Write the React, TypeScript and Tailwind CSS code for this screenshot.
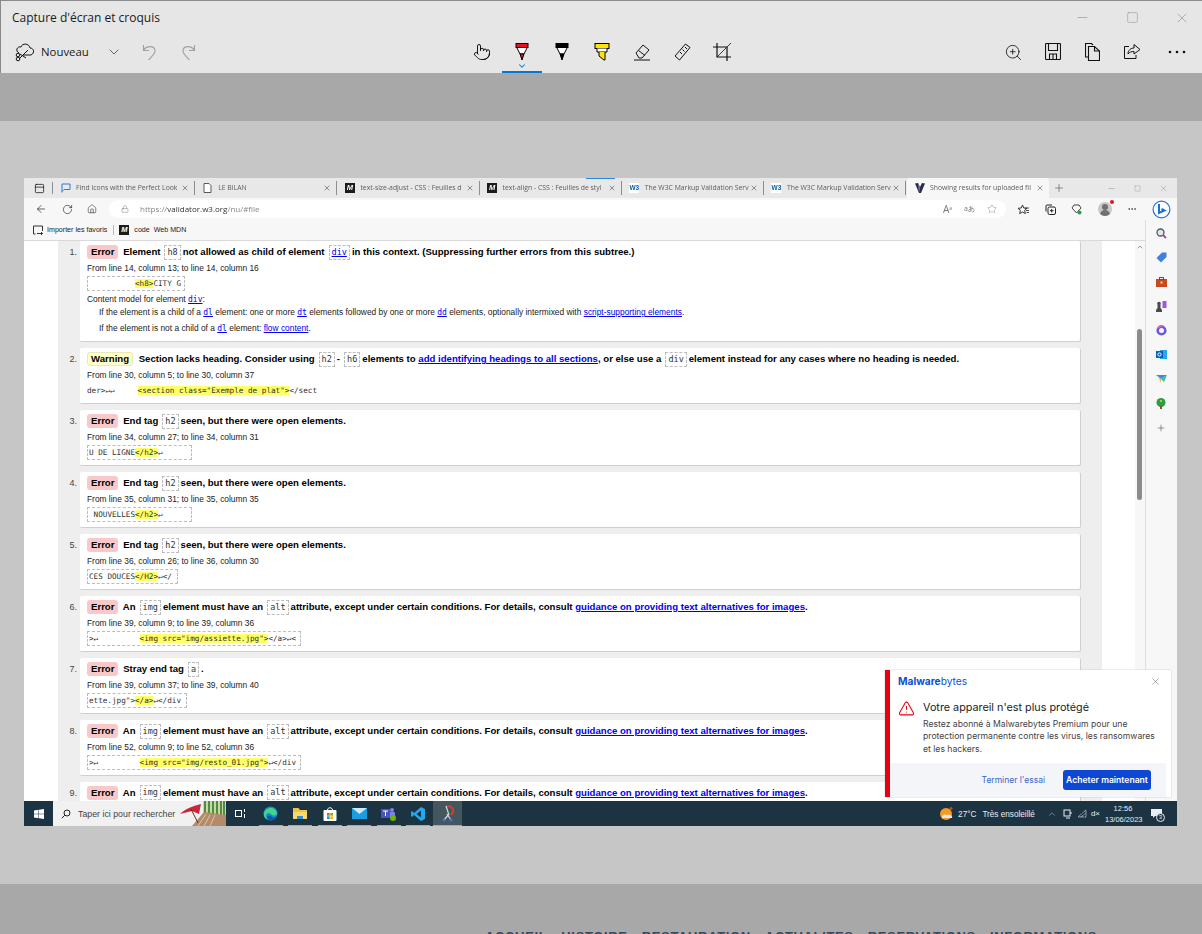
import type { ReactNode } from "react";
import {
  ArrowLeft,
  ChevronDown,
  ChevronUp,
  Home,
  Lock,
  Minus,
  MoreHorizontal,
  PanelTop,
  Plus,
  Pointer,
  RotateCw,
  Square,
  Star,
  TriangleAlert,
  X,
  ZoomIn,
} from "lucide-react";

const SANS = "font-['Liberation_Sans',Arial,sans-serif]";
const MONO = "font-['DejaVu_Sans_Mono',monospace]";

function Tool({ children }: { children: ReactNode }) {
  return <div className="w-[40px] h-full flex items-center justify-center text-black">{children}</div>;
}

function Marker({ top, body }: { top: string; body: string }) {
  return (
    <svg width="14" height="18" viewBox="0 0 14 18">
      <rect x="1" y="0.5" width="12" height="4" fill={top} stroke="#000" />
      <path d="M2 5 L5 11 L9 11 L12 5" fill={body} stroke="#000" />
      <path d="M5 11 L7 17 L9 11Z" fill={top} stroke="#000" />
    </svg>
  );
}

function Highlighter() {
  return (
    <svg width="16" height="18" viewBox="0 0 16 18">
      <rect x="1" y="0.5" width="14" height="5" fill="#ffe600" stroke="#000" />
      <path d="M3 5.5 V9 H13 V5.5" fill="#fff" stroke="#000" />
      <path d="M5 9 V13 L10 17 H11 V9" fill="#ffe600" stroke="#000" />
    </svg>
  );
}

function UndoIcon({ flip }: { flip?: boolean }) {
  return (
    <svg className={flip ? "-scale-x-100" : ""} width="14" height="18" viewBox="0 0 14 18" fill="none" stroke="#a0a0a0" strokeWidth="1.1">
      <path d="M1.5 2 V7.5 H7" />
      <path d="M1.5 7.5 C4 2.5 13 2 13 8 C13 11 9 14 6.5 17" />
    </svg>
  );
}

function CaptureBar() {
  return (
    <div className="h-[73px] bg-[#e6e6e6] border-t border-l border-[#8a8a8a] flex flex-col font-['Open_Sans',sans-serif] text-[#1a1a1a]">
      <div className="h-[35px] flex items-center relative">
        <span className="pl-[11px] pt-[1px] text-[12px]">Capture d'écran et croquis</span>
        <div className="ml-auto flex items-center text-[#8f8f8f]">
          <div className="w-[50px] flex justify-center"><Minus size={15} strokeWidth={1} /></div>
          <div className="w-[50px] flex justify-center"><Square size={13} strokeWidth={1} /></div>
          <div className="w-[50px] flex justify-center -mr-[5px]"><X size={16} strokeWidth={1} /></div>
        </div>
      </div>
      <div className="flex-1 flex items-center pb-[3px] relative">
        <div className="w-[461px] flex items-center">
          <svg className="ml-[13px]" width="22" height="20" viewBox="0 0 22 20" fill="none" stroke="#111" strokeWidth="1">
            <path d="M5 11 C1 9 3 4 7 5 C8 1 15 1 16 6 C20 6 21 11 17 13 L9 13" />
            <path d="M14 8 L6 16 M6 12 L12 16" />
            <circle cx="4" cy="17" r="1.8" />
            <circle cx="4" cy="13" r="1.8" />
          </svg>
          <span className="ml-[5px] text-[11.4px]">Nouveau</span>
          <ChevronDown className="ml-[17px] text-[#222]" size={16} strokeWidth={1} />
          <div className="ml-[20px]"><UndoIcon /></div>
          <div className="ml-[26px]"><UndoIcon flip /></div>
        </div>
        <div className="flex h-[36px] relative">
          <Tool><Pointer size={18} strokeWidth={1.2} /></Tool>
          <Tool><Marker top="#e81123" body="#fff" /></Tool>
          <Tool><Marker top="#000" body="#fff" /></Tool>
          <Tool><Highlighter /></Tool>
          <Tool>
            <svg width="18" height="18" viewBox="0 0 18 18" fill="none" stroke="#111">
              <path d="M3 10 L10 2 L16 7 L9 15 H6 Z" />
              <path d="M5.5 7.5 L12 12.5" />
              <path d="M1 17 H17" />
            </svg>
          </Tool>
          <Tool>
            <svg width="17" height="18" viewBox="0 0 17 18" fill="none" stroke="#111">
              <path d="M1 13 L11.5 1 L16 4.5 L5.5 17 Z" />
              <path d="M6 9 L8 11 M8.5 6.5 L10.5 8.5 M11 4 L13 6" />
            </svg>
          </Tool>
          <Tool>
            <svg width="18" height="18" viewBox="0 0 18 18" fill="none" stroke="#111" strokeWidth="1.2">
              <path d="M0 4 H14 V18 M4 0 V14 H18" />
              <path d="M4 14 L18 0" strokeWidth="0.8" />
            </svg>
          </Tool>
          <div className="absolute left-[40px] bottom-[-3px] w-[40px] h-[2px] bg-[#0078d7]" />
          <ChevronDown className="absolute left-[55px] bottom-[-1px] text-[#0078d7]" size={10} strokeWidth={2.5} />
        </div>
        <div className="ml-auto flex">
          <div className="w-[39.7px] flex justify-center"><ZoomIn size={19} strokeWidth={1.1} /></div>
          <div className="w-[39.7px] flex justify-center">
            <svg width="16" height="17" viewBox="0 0 16 17" fill="none" stroke="#111" strokeWidth="1.1">
              <path d="M1.5 0.5 H14.5 Q15.5 0.5 15.5 1.5 V15.5 Q15.5 16.5 14.5 16.5 H1.5 Q0.5 16.5 0.5 15.5 V1.5 Q0.5 0.5 1.5 0.5Z" />
              <path d="M3.5 1 V7.5 H12.5 V1" />
              <path d="M4.5 16 V11 H11.5 V16 M8 11 V16" />
            </svg>
          </div>
          <div className="w-[39.7px] flex justify-center">
            <svg width="15" height="18" viewBox="0 0 15 18" fill="none" stroke="#111" strokeWidth="1.1">
              <path d="M4 14 H0.5 V0.5 H6.5 L8 2" />
              <path d="M3.5 3.5 H9.5 L14.5 8 V17.5 H3.5 Z" fill="#e6e6e6" />
              <path d="M9.5 3.5 V8 H14.5" />
            </svg>
          </div>
          <div className="w-[39.7px] flex justify-center">
            <svg width="17" height="17" viewBox="0 0 17 17" fill="none" stroke="#111">
              <path d="M5 3.5 H0.5 V15.5 H12 V12" />
              <path d="M4 11 C4 7 7 5 10 5 V1.5 L16 6.5 L10 11 V8.5 C7.5 8.5 5.5 9 4 11Z" />
            </svg>
          </div>
          <div className="w-[50px] flex justify-center items-center">
            <svg width="18" height="4" viewBox="0 0 18 4" fill="#111">
              <circle cx="2" cy="2" r="1.3" />
              <circle cx="9" cy="2" r="1.3" />
              <circle cx="16" cy="2" r="1.3" />
            </svg>
          </div>
        </div>
      </div>
    </div>
  );
}

function BrowserTab({ icon, title, active }: { icon: ReactNode; title: string; active?: boolean }) {
  return (
    <div
      className={
        "w-[142.2px] flex items-center pl-[7px] pr-[5px] " +
        (active ? "h-full bg-[#f7f7f7] rounded-t-[3px]" : "h-[14px] border-r border-[#8e8e8e]")
      }
    >
      <div className="w-[11px] h-[11px] flex items-center justify-center shrink-0">{icon}</div>
      <span className="ml-[5px] w-[103px] text-[6.85px] text-[#5c5c5c] whitespace-nowrap">{title}</span>
      <X className="ml-auto text-[#333] shrink-0" size={8} strokeWidth={1.5} />
    </div>
  );
}

function MdnIcon() {
  return (
    <div className={"w-[10px] h-[10px] bg-[#1b1b1b] text-white text-[7.5px] font-bold italic leading-[10px] text-center " + SANS}>M</div>
  );
}

function W3Icon() {
  return (
    <div className={"w-[10px] h-[10px] bg-white text-[#0a5da8] text-[6.5px] font-bold leading-[10px] text-center " + SANS}>W3</div>
  );
}

function VIcon() {
  return (
    <svg width="10" height="10" viewBox="0 0 10 10">
      <path d="M0 0.5 L3 0 L5 4 L7 0 L10 0.5 L6 10 L4 10Z" fill="#2a2a4a" />
      <path d="M3 0 L5 5 L4 10Z" fill="#7a7ab0" />
    </svg>
  );
}

function TabStrip() {
  return (
    <div className="h-[20px] bg-[#e8e8e8] flex items-end relative">
      <div className="w-[28px] h-full flex items-center justify-center">
        <PanelTop size={11} strokeWidth={1.5} className="text-black ml-[2px]" />
      </div>
      <div className="w-[1px] h-[12px] mb-[4px] bg-[#8e8e8e]" />
      <div className="flex h-full items-center w-[854px] shrink-0">
        <BrowserTab
          title="Find Icons with the Perfect Look"
          icon={
            <svg width="10" height="10" viewBox="0 0 10 10" fill="none" stroke="#2b7de0" strokeWidth="1">
              <path d="M1 9.5 V1 H9 V6.5 H3 L1 8.5" />
            </svg>
          }
        />
        <BrowserTab
          title="LE BILAN"
          icon={
            <svg width="9" height="10" viewBox="0 0 9 10" fill="#fff" stroke="#333" strokeWidth="0.8">
              <path d="M1 0.5 H6 L8 2.5 V9.5 H1Z" />
            </svg>
          }
        />
        <BrowserTab title="text-size-adjust - CSS : Feuilles d" icon={<MdnIcon />} />
        <BrowserTab title="text-align - CSS : Feuilles de styl" icon={<MdnIcon />} />
        <BrowserTab title="The W3C Markup Validation Serv" icon={<W3Icon />} />
        <BrowserTab title="The W3C Markup Validation Serv" icon={<W3Icon />} />
      </div>
      <BrowserTab active title="Showing results for uploaded fil" icon={<VIcon />} />
      <Plus className="ml-[4px] mb-[4px] text-[#333]" size={12} strokeWidth={1} />
      <div className="ml-auto flex h-full items-center text-[#777] pr-[9px] gap-[18px]">
        <Minus size={9} strokeWidth={1} />
        <Square size={7} strokeWidth={1} />
        <X size={9} strokeWidth={1} />
      </div>
      <div className="absolute left-[562px] top-0 w-[29px] h-[1px] bg-[#2b88d8]" />
    </div>
  );
}

function AddressBar() {
  return (
    <div className="h-[22px] bg-[#f7f7f7] flex items-center text-[#222] relative">
      <ArrowLeft className="ml-[11px]" size={12} strokeWidth={1.4} />
      <RotateCw className="ml-[15px]" size={11} strokeWidth={1.4} />
      <Home className="ml-[14px]" size={10} strokeWidth={1.3} />
      <div className="ml-[12px] w-[897px] h-[18px] bg-white rounded-full flex items-center text-[8px]">
        <Lock className="ml-[12px] text-[#666]" size={8} strokeWidth={1.2} />
        <span className="ml-[11px] text-[#888]">
          https://<span className="text-[#333]">validator.w3.org</span>/nu/#file
        </span>
        <div className="ml-auto flex items-center text-[#777] gap-[12px] pr-[9px]">
          <span className="text-[10px]">A<sup className="text-[5px]">a</sup></span>
          <span className="text-[7px]">aあ</span>
          <Star size={10} strokeWidth={1} />
        </div>
      </div>
      <svg className="ml-[12px]" width="11" height="11" viewBox="0 0 11 11" fill="none" stroke="#222">
        <path d="M4.5 1 L5.8 4 L9 4.3 L6.6 6.4 L7.3 9.6 L4.5 8 L1.7 9.6 L2.4 6.4 L0 4.3 L3.2 4Z" strokeWidth="0.9" />
        <path d="M8 6.5 H11 M8.5 8.5 H11 M7 4 H11" strokeWidth="0.8" />
      </svg>
      <svg className="ml-[16px]" width="11" height="11" viewBox="0 0 11 11" fill="none" stroke="#222">
        <rect x="3" y="3" width="7.5" height="7.5" rx="1.5" />
        <path d="M1 7.5 V2 Q1 1 2 1 H7 M6.7 5 V8.5 M5 6.7 H8.5" />
      </svg>
      <svg className="ml-[15px]" width="11" height="11" viewBox="0 0 11 11" fill="none" stroke="#444">
        <path d="M1 4 L3 1 H8 L10 4 L5.5 9Z" />
        <circle cx="8.5" cy="8.5" r="2" fill="#1aa251" stroke="none" />
      </svg>
      <div className="ml-[16px] relative w-[14px] h-[14px] rounded-full bg-[#c8c8c8] overflow-hidden flex flex-col items-center">
        <div className="w-[6px] h-[6px] mt-[2px] rounded-full bg-[#707070]" />
        <div className="w-[10px] h-[6px] rounded-t-full bg-[#707070]" />
      </div>
      <div className="absolute left-[1086px] top-[2px] w-[4px] h-[4px] rounded-full bg-[#e81123]" />
      <MoreHorizontal className="ml-[15px]" size={10} strokeWidth={1.5} />
      <svg className="ml-[15px]" width="19" height="19" viewBox="0 0 19 19" fill="none">
        <circle cx="9.5" cy="9.5" r="8.4" fill="#fff" stroke="#2a6fd6" strokeWidth="1.2" />
        <path d="M7 4 V13 L12.5 10.5 L9.5 9" stroke="#1173d4" strokeWidth="2" />
      </svg>
    </div>
  );
}

function FavoritesBar() {
  return (
    <div className={"h-[21px] bg-[#f7f7f7] border-b border-[#d9d9d9] flex items-center text-[7.1px] text-[#222] " + SANS}>
      <svg className="ml-[9px]" width="10" height="10" viewBox="0 0 10 10" fill="none" stroke="#333">
        <path d="M2.5 9 H0.5 V1 H9.5 V6 M4 8.5 H10 M8 7 L9.5 8.5 L8 10" />
      </svg>
      <span className="ml-[4px]">Importer les favoris</span>
      <div className="ml-[6px] w-[1px] h-[10px] bg-[#bbb]" />
      <div className="ml-[5px]"><MdnIcon /></div>
      <span className="ml-[5px]">code</span>
      <span className="ml-[4px]">Web MDN</span>
    </div>
  );
}

function Chip({ children, link }: { children: ReactNode; link?: boolean }) {
  return (
    <code
      className={
        "inline-block ml-[4px] mr-[2px] px-[2px] h-[15px] leading-[13px] align-middle border border-dashed border-[#bdbdbd] text-[8.5px] font-normal " +
        MONO +
        (link ? " text-[#0000ee] underline" : " text-[#333]")
      }
    >
      {children}
    </code>
  );
}

function Badge({ kind }: { kind: "Error" | "Warning" }) {
  return (
    <span
      className={
        "inline-block h-[14px] rounded-[3px] " +
        (kind === "Error"
          ? "px-[4px] mr-[2px] leading-[14px] bg-[#f9c8c8]"
          : "px-[3px] mr-[3px] leading-[12px] bg-[#ffffc8] border border-[#e8e8b8]")
      }
    >
      {kind}
    </span>
  );
}

function MLink({ children }: { children: ReactNode }) {
  return <a className="text-[#0000ee] underline">{children}</a>;
}

function InlineCode({ children }: { children: ReactNode }) {
  return <code className={"text-[#0000ee] underline text-[8px] " + MONO}>{children}</code>;
}

function Extract({ children, plain, w }: { children: ReactNode; plain?: boolean; w: string }) {
  return (
    <div
      className={
        "h-[15px] leading-[13px] text-[7.65px] text-[#333] whitespace-pre mt-[2px] border border-dashed " +
        MONO +
        " " +
        w +
        (plain ? " border-transparent -ml-[1px]" : " border-[#bdbdbd] pl-[1px]")
      }
    >
      {children}
    </div>
  );
}

function Y({ children }: { children: ReactNode }) {
  return <span className="bg-[#ffff66]">{children}</span>;
}

function Message({ n, h, children }: { n: number; h: string; children: ReactNode }) {
  return (
    <div className={"flex shrink-0 " + h}>
      <div className="w-[22px] text-[9px] text-[#444] pt-[5px] text-right pr-[3px]">{n}.</div>
      <div className="w-[1001px] bg-white rounded-[2px] border-b border-r border-[#cfcfcf] pl-[7px] pt-[3px] overflow-hidden">
        {children}
      </div>
    </div>
  );
}

function Title({ children }: { children: ReactNode }) {
  return <div className="text-[9.6px] leading-[16px] font-bold text-black whitespace-nowrap">{children}</div>;
}

function From({ children }: { children: ReactNode }) {
  return <div className="text-[8.4px] leading-[11px] mt-[3px] text-[#222]">{children}</div>;
}

function AltTitle() {
  return (
    <Title>
      <Badge kind="Error" /> An<Chip>img</Chip>element must have an<Chip>alt</Chip>attribute, except under certain conditions. For details, consult{" "}
      <MLink>guidance on providing text alternatives for images</MLink>.
    </Title>
  );
}

function EndTag() {
  return (
    <Title>
      <Badge kind="Error" /> End tag<Chip>h2</Chip>seen, but there were open elements.
    </Title>
  );
}

function Results() {
  return (
    <div className={"flex-1 flex bg-white overflow-hidden " + SANS}>
      <div className="ml-[34px] w-[1044px] bg-[#eeeeee] flex flex-col gap-[5.95px] overflow-hidden">
        <Message n={1} h="h-[101px]">
          <Title>
            <Badge kind="Error" /> Element<Chip>h8</Chip>not allowed as child of element<Chip link>div</Chip>in this context. (Suppressing further errors from this subtree.)
          </Title>
          <From>From line 14, column 13; to line 14, column 16</From>
          <Extract w="w-[98px]">{"          "}<Y>{"<h8>"}</Y>CITY G</Extract>
          <div className="text-[8.4px] leading-[11px] mt-[3px] text-[#222]">Content model for element <InlineCode>div</InlineCode>:</div>
          <div className="text-[8.4px] leading-[11px] mt-[2px] ml-[12px] text-[#222] whitespace-nowrap">
            If the element is a child of a <InlineCode>dl</InlineCode> element: one or more <InlineCode>dt</InlineCode> elements followed by one or more <InlineCode>dd</InlineCode> elements, optionally intermixed with <MLink>script-supporting elements</MLink>.
          </div>
          <div className="text-[8.4px] leading-[11px] mt-[5px] ml-[12px] text-[#222]">
            If the element is not a child of a <InlineCode>dl</InlineCode> element: <MLink>flow content</MLink>.
          </div>
        </Message>
        <Message n={2} h="h-[56px]">
          <Title>
            <Badge kind="Warning" /> Section lacks heading. Consider using<Chip>h2</Chip>-<Chip>h6</Chip>elements to <MLink>add identifying headings to all sections</MLink>, or else use a<Chip>div</Chip>element instead for any cases where no heading is needed.
          </Title>
          <From>From line 30, column 5; to line 30, column 37</From>
          <Extract plain w="w-[260px]">{"der>↵↵     "}<Y>{'<section class="Exemple de plat">'}</Y>{"</sect"}</Extract>
        </Message>
        <Message n={3} h="h-[56px]">
          <EndTag />
          <From>From line 34, column 27; to line 34, column 31</From>
          <Extract w="w-[105px]">U DE LIGNE<Y>{"</h2>"}</Y>↵</Extract>
        </Message>
        <Message n={4} h="h-[56px]">
          <EndTag />
          <From>From line 35, column 31; to line 35, column 35</From>
          <Extract w="w-[105px]"> NOUVELLES<Y>{"</h2>"}</Y>↵</Extract>
        </Message>
        <Message n={5} h="h-[56px]">
          <EndTag />
          <From>From line 36, column 26; to line 36, column 30</From>
          <Extract w="w-[91px]">CES DOUCES<Y>{"</H2>"}</Y>{"↵</"}</Extract>
        </Message>
        <Message n={6} h="h-[56px]">
          <AltTitle />
          <From>From line 39, column 9; to line 39, column 36</From>
          <Extract w="w-[214px]">{">↵         "}<Y>{'<img src="img/assiette.jpg">'}</Y>{"</a>↵<"}</Extract>
        </Message>
        <Message n={7} h="h-[56px]">
          <Title>
            <Badge kind="Error" /> Stray end tag<Chip>a</Chip>.
          </Title>
          <From>From line 39, column 37; to line 39, column 40</From>
          <Extract w="w-[100px]">{'ette.jpg">'}<Y>{"</a>"}</Y>{"↵</div"}</Extract>
        </Message>
        <Message n={8} h="h-[56px]">
          <AltTitle />
          <From>From line 52, column 9; to line 52, column 36</From>
          <Extract w="w-[214px]">{">↵         "}<Y>{'<img src="img/resto_01.jpg">'}</Y>{"↵</div"}</Extract>
        </Message>
        <Message n={9} h="h-[56px]">
          <AltTitle />
        </Message>
      </div>
      <div className="w-[33px] bg-white" />
      <div className="w-[10px] bg-[#f7f7f7] relative">
        <ChevronUp className="absolute top-[2px] left-[1px] text-[#888]" size={8} strokeWidth={2.5} />
        <div className="absolute top-[88px] left-[2px] w-[5px] h-[171px] rounded-full bg-[#8c8c8c]" />
      </div>
    </div>
  );
}

function SideItem({ children }: { children: ReactNode }) {
  return <div className="h-[24.3px] flex items-center justify-center">{children}</div>;
}

function EdgeSidebar() {
  return (
    <div className="w-[32px] bg-[#f7f7f7] border-l border-[#dedede] flex flex-col pt-[1px] pr-[1px]">
      <SideItem>
        <svg width="11" height="11" viewBox="0 0 11 11" fill="none">
          <circle cx="4.5" cy="4.5" r="3.5" fill="#dde6f2" stroke="#555" strokeWidth="1.3" />
          <path d="M7 7 L10 10" stroke="#a63ad6" strokeWidth="1.8" />
        </svg>
      </SideItem>
      <SideItem>
        <svg width="11" height="11" viewBox="0 0 11 11">
          <path d="M6 0.5 H10.5 V5 L5 10.5 L0.5 6Z" fill="#3f7fe0" />
        </svg>
      </SideItem>
      <SideItem>
        <svg width="11" height="10" viewBox="0 0 11 10">
          <rect x="0" y="2" width="11" height="8" fill="#c9481f" />
          <rect x="3.5" y="0.5" width="4" height="2" fill="none" stroke="#9b3a1c" />
          <rect x="4.5" y="4.5" width="2" height="2" fill="#f3d9a6" />
        </svg>
      </SideItem>
      <SideItem>
        <svg width="12" height="11" viewBox="0 0 12 11">
          <path d="M1 11 V9 L2.5 7 V3.5 H5.5 V7 L7 9 V11Z" fill="#4a4a4a" />
          <circle cx="4" cy="2.5" r="1.8" fill="#4a4a4a" />
          <rect x="7.5" y="0" width="4" height="7" fill="#9b59e6" />
        </svg>
      </SideItem>
      <SideItem>
        <svg width="11" height="11" viewBox="0 0 11 11" fill="none">
          <circle cx="5.5" cy="5.5" r="3.8" stroke="#6a5ad6" strokeWidth="2.6" />
          <path d="M2 3 A4.5 4.5 0 0 1 7 1.2" stroke="#d65ac8" strokeWidth="2" />
        </svg>
      </SideItem>
      <SideItem>
        <svg width="11" height="11" viewBox="0 0 11 11">
          <rect x="4" y="1" width="7" height="9" fill="#28a8ea" />
          <rect x="0" y="2" width="7" height="7" fill="#0f5fb5" />
          <circle cx="3.5" cy="5.5" r="1.6" fill="none" stroke="#fff" />
        </svg>
      </SideItem>
      <SideItem>
        <svg width="11" height="9" viewBox="0 0 11 9">
          <path d="M0 1 H11 L5 5Z" fill="#2f8fe6" />
          <path d="M2 2 L5 5 L5 9Z" fill="#e8b23a" />
          <path d="M5 5 L11 1 L8 8Z" fill="#37b8b0" />
        </svg>
      </SideItem>
      <SideItem>
        <svg width="10" height="11" viewBox="0 0 10 11">
          <circle cx="5" cy="4.5" r="4.5" fill="#2e9e46" />
          <rect x="4" y="8" width="2" height="3" fill="#7a5a2a" />
          <circle cx="5" cy="3" r="1" fill="#e8d03a" />
        </svg>
      </SideItem>
      <SideItem>
        <Plus className="text-[#333]" size={10} strokeWidth={1.2} />
      </SideItem>
    </div>
  );
}

function Under({ children }: { children: ReactNode }) {
  return (
    <div className="relative w-[24px] h-[25px] flex items-center justify-center mx-[2.75px]">
      {children}
      <div className="absolute bottom-0 left-0 right-0 h-[1px] bg-[#7fb2dc]" />
    </div>
  );
}

function Taskbar() {
  return (
    <div className={"h-[25px] bg-[#1c3342] flex items-center text-white " + SANS}>
      <div className="w-[29px] flex justify-center">
        <svg width="10" height="10" viewBox="0 0 10 10" fill="#fff">
          <path d="M0 1.5 L4.5 0.8 V4.7 H0Z M5 0.7 L10 0 V4.7 H5Z M0 5.3 H4.5 V9.2 L0 8.5Z M5 5.3 H10 V10 L5 9.3Z" />
        </svg>
      </div>
      <div className="w-[173px] h-[25px] bg-[#f1f1f1] flex items-center text-[#444] text-[8.8px] overflow-hidden">
        <svg className="ml-[8px]" width="10" height="10" viewBox="0 0 10 10" fill="none" stroke="#222">
          <circle cx="6" cy="4" r="3" />
          <path d="M3.8 6.2 L0.8 9.2" />
        </svg>
        <span className="ml-[7px] pt-[3px] whitespace-nowrap">Taper ici pour rechercher</span>
        <svg className="ml-auto shrink-0" width="46" height="25" viewBox="0 0 46 25">
          <rect x="23" y="0" width="23" height="14" fill="#c7d89a" />
          <path d="M25 0 V14 M29 0 V14 M33 0 V14 M37 0 V14 M41 0 V14 M44 0 V14" stroke="#2f7a35" strokeWidth="1.6" />
          <path d="M12 25 L24 11 L46 14 V25 H12Z" fill="#b38a6a" />
          <path d="M18 25 L26 13 M24 25 L30 14 M30 25 L35 14" stroke="#e0c4a6" strokeWidth="1" />
          <path d="M0 13 C6 7 14 5 21 3 L19 13 L12 10 Z" fill="#c8283a" />
          <path d="M11 8 L18 22" stroke="#6a2a1a" />
        </svg>
      </div>
      <div className="w-[29px] flex justify-center">
        <svg width="11" height="9" viewBox="0 0 11 9" fill="none" stroke="#fff">
          <rect x="0.5" y="1.5" width="6" height="6" />
          <path d="M9.5 0 V3 M9.5 5 V9" />
        </svg>
      </div>
      <div className="flex ml-[1px]">
        <Under>
          <svg width="15" height="15" viewBox="0 0 15 15">
            <circle cx="7.5" cy="7.5" r="7" fill="#1b89d6" />
            <path d="M1 7 C3 1 12 0 14 7 C14 10 9 10 8 8 C6 6 3 7 3 10 C3 12 5 14 7 14 C3 14 0 11 1 7Z" fill="#44d488" />
            <path d="M4 12 C4 9 8 9 9 11 C11 12 13 11 14 10 C13 13 9 15 7 14 C5.5 14 4 13 4 12Z" fill="#0c5da6" />
          </svg>
        </Under>
        <Under>
          <svg width="14" height="13" viewBox="0 0 14 13">
            <path d="M0 1 H5.5 L7 3 H14 V12 H0Z" fill="#f2c14a" />
            <rect x="0" y="5" width="14" height="7" fill="#fbd96b" />
            <rect x="4" y="9" width="6" height="3" fill="#2e8fd8" />
          </svg>
        </Under>
        <Under>
          <svg width="14" height="14" viewBox="0 0 14 14">
            <rect x="0.5" y="3" width="13" height="11" rx="1" fill="#fff" />
            <path d="M4.5 3 C4.5 0 9.5 0 9.5 3" fill="none" stroke="#fff" />
            <rect x="4" y="6" width="2.7" height="2.7" fill="#f25022" />
            <rect x="7.3" y="6" width="2.7" height="2.7" fill="#7fba00" />
            <rect x="4" y="9.3" width="2.7" height="2.7" fill="#00a4ef" />
            <rect x="7.3" y="9.3" width="2.7" height="2.7" fill="#ffb900" />
          </svg>
        </Under>
        <Under>
          <svg width="15" height="11" viewBox="0 0 15 11">
            <rect width="15" height="11" fill="#1b9de2" />
            <path d="M0 0 L7.5 6 L15 0Z" fill="#cfeafa" />
          </svg>
        </Under>
        <Under>
          <svg width="15" height="14" viewBox="0 0 15 14">
            <circle cx="11" cy="3" r="2" fill="#7b83eb" />
            <rect x="8" y="5" width="6" height="6" rx="1" fill="#7b83eb" />
            <rect x="0" y="2" width="9" height="9" fill="#4b53bc" />
            <path d="M2 4 H7 M4.5 4 V9" stroke="#fff" />
            <circle cx="12" cy="11" r="3" fill="#6bb700" />
          </svg>
        </Under>
        <Under>
          <svg width="14" height="14" viewBox="0 0 14 14">
            <path d="M10 0 L14 2 V12 L10 14 L3 8 L1 10 L0 9 V5 L1 4 L3 6Z" fill="#23a9f1" />
            <path d="M10 3.5 L5.5 7 L10 10.5Z" fill="#1c3342" />
          </svg>
        </Under>
        <div className="relative w-[29px] h-[25px] bg-[#46565f] flex items-center justify-center">
          <svg width="14" height="17" viewBox="0 0 14 17" fill="none">
            <path d="M5 2 C9 0 13 3 12 7 L10 10" stroke="#d2402c" strokeWidth="2" />
            <path d="M5 1 L8 10 M3 15 L8 9 M10 15 L6 9" stroke="#cfd8dc" strokeWidth="1.2" />
            <circle cx="3" cy="15" r="1.5" fill="#2f7fd6" />
            <circle cx="10" cy="15" r="1.5" fill="#2f7fd6" />
          </svg>
          <div className="absolute bottom-0 left-0 right-0 h-[1px] bg-[#7fb2dc]" />
        </div>
      </div>
      <div className="ml-auto flex items-center text-[8.2px] text-[#e8eef2]">
        <svg width="14" height="13" viewBox="0 0 14 13">
          <circle cx="7" cy="7" r="6" fill="#f59a23" />
          <path d="M3 10 C3 7 7 7 8 8 C11 7 14 9 13 11 H3Z" fill="#dfe7ee" />
          <circle cx="12" cy="1.5" r="1.5" fill="#d2402c" />
        </svg>
        <span className="ml-[5px] pt-[3px]">27°C</span>
        <span className="ml-[6px] pt-[3px]">Très ensoleillé</span>
        <ChevronUp className="ml-[12px]" size={10} strokeWidth={1} />
        <svg className="ml-[6px]" width="9" height="10" viewBox="0 0 9 10" fill="none" stroke="#e8eef2">
          <rect x="1" y="1" width="6" height="6" />
          <path d="M3 9 H7 M7 4 H9" />
        </svg>
        <svg className="ml-[5px]" width="10" height="9" viewBox="0 0 10 9" fill="none" stroke="#e8eef2" strokeWidth="0.8" strokeDasharray="1 0.6">
          <path d="M1 8 L9 1 V8 H1Z M4 8 L9 4" />
        </svg>
        <span className="ml-[4px] text-[8px]">d×</span>
        <div className="ml-[5px] w-[36px] text-center text-[7.5px] leading-[11px]">
          <div>12:56</div>
          <div className="whitespace-nowrap">13/06/2023</div>
        </div>
        <div className="relative ml-[10px] mr-[15px] w-[11px] h-[10px]">
          <svg width="11" height="10" viewBox="0 0 11 10" fill="#e8eef2">
            <path d="M0 0 H11 V7 H4 L2 9 V7 H0Z" />
          </svg>
          <div className="absolute -right-[3px] -bottom-[3px] w-[9px] h-[9px] rounded-full border border-[#e8eef2] bg-[#1c3342] text-[6px] leading-[7px] text-center">3</div>
        </div>
      </div>
    </div>
  );
}

function MalwarebytesToast() {
  return (
    <div className="absolute left-[861px] top-[492px] w-[286px] h-[127px] bg-white border-l-[5px] border-[#e60012] shadow-[0_0_1px_#999] font-['Inter',sans-serif]">
      <div className="h-[23px] flex items-center pl-[8px] text-[10.2px] text-[#0d4fd1]">
        <span className="font-bold">Malware</span>bytes
        <X className="ml-auto mr-[10px] text-[#555]" size={11} strokeWidth={1} />
      </div>
      <div className="flex mt-[8px]">
        <TriangleAlert className="ml-[8px] mt-[-1px] text-[#e60012]" size={17} strokeWidth={1.5} />
        <div className="ml-[8px]">
          <div className="text-[10.8px] leading-[14px] text-[#222]">Votre appareil n'est plus protégé</div>
          <div className="mt-[3px] text-[8.65px] leading-[12.4px] text-[#444] w-[232px]">
            Restez abonné à Malwarebytes Premium pour une protection permanente contre les virus, les ransomwares et les hackers.
          </div>
        </div>
      </div>
      <div className="absolute left-0 bottom-0 w-[276px] h-[34px] bg-[#f4f5f9] flex items-center justify-end pr-[15px] text-[8.5px]">
        <span className="text-[#3a66c8]">Terminer l'essai</span>
        <div className="ml-[18px] w-[88px] h-[20px] rounded-[3px] bg-[#0d47d4] text-white text-[8.6px] font-semibold flex items-center justify-center">
          Acheter maintenant
        </div>
      </div>
    </div>
  );
}

function BrowserShot() {
  return (
    <div className="ml-[24px] mt-[57px] w-[1153px] h-[648px] flex flex-col relative overflow-hidden font-['Open_Sans',sans-serif] blur-[0.35px]">
      <TabStrip />
      <AddressBar />
      <div className="flex-1 flex min-h-0">
        <div className="flex-1 flex flex-col min-w-0">
          <FavoritesBar />
          <Results />
        </div>
        <EdgeSidebar />
      </div>
      <Taskbar />
      <MalwarebytesToast />
    </div>
  );
}

export default function App() {
  return (
    <div className="w-[1202px] h-[934px] overflow-hidden bg-[#a8a8a8] flex flex-col">
      <CaptureBar />
      <div className="h-[48px] shrink-0" />
      <div className="h-[763px] shrink-0 bg-[#c6c6c6] overflow-hidden">
        <BrowserShot />
      </div>
      <div className={"mt-[45px] pl-[485px] text-[13px] leading-[15px] font-bold text-[#34495e] tracking-wider whitespace-nowrap flex gap-[14px] " + SANS}>
        <span>ACCUEIL</span>
        <span>HISTOIRE</span>
        <span>RESTAURATION</span>
        <span>ACTUALITES</span>
        <span>RESERVATIONS</span>
        <span>INFORMATIONS</span>
      </div>
    </div>
  );
}
